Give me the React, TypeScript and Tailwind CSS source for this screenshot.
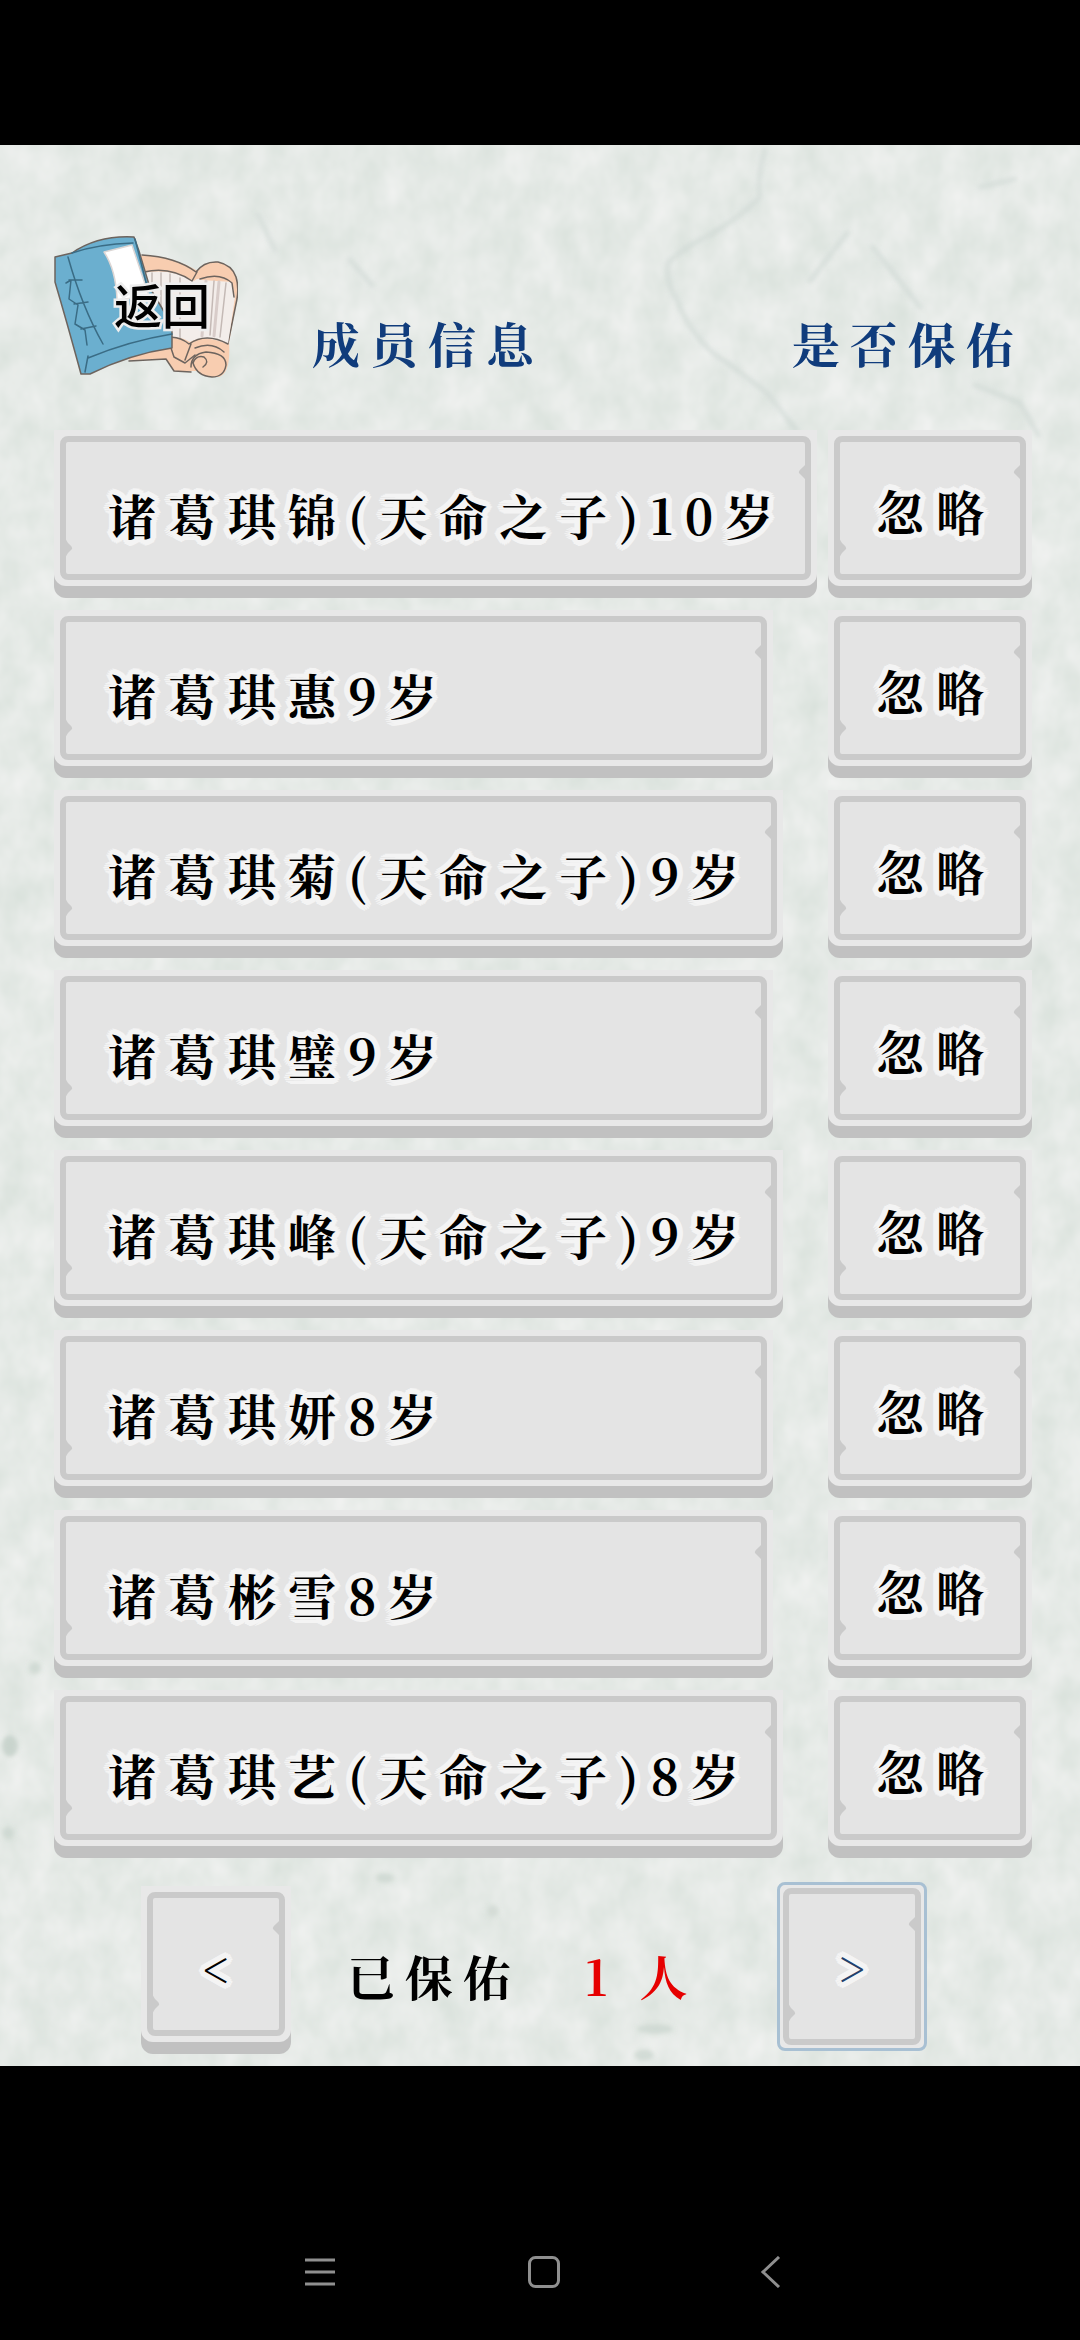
import type { ReactNode } from 'react'

const members = [
  { name: '诸葛琪锦', chosen: true, age: 10 },
  { name: '诸葛琪惠', chosen: false, age: 9 },
  { name: '诸葛琪菊', chosen: true, age: 9 },
  { name: '诸葛琪璧', chosen: false, age: 9 },
  { name: '诸葛琪峰', chosen: true, age: 9 },
  { name: '诸葛琪妍', chosen: false, age: 8 },
  { name: '诸葛彬雪', chosen: false, age: 8 },
  { name: '诸葛琪艺', chosen: true, age: 8 },
]

const halo =
  '[text-shadow:6px_0_#f4f4f4,-6px_0_#f4f4f4,0_6px_#f4f4f4,0_-6px_#f4f4f4,4px_4px_#f4f4f4,-4px_4px_#f4f4f4,4px_-4px_#f4f4f4,-4px_-4px_#f4f4f4,5px_2px_#f4f4f4,5px_-2px_#f4f4f4,-5px_2px_#f4f4f4,-5px_-2px_#f4f4f4,2px_5px_#f4f4f4,-2px_5px_#f4f4f4,2px_-5px_#f4f4f4,-2px_-5px_#f4f4f4,2px_0_#f4f4f4,-2px_0_#f4f4f4,0_2px_#f4f4f4,0_-2px_#f4f4f4]'

// Inner panel of a stone key, with the two chipped edges
function Face({ children, className = '' }: { children: ReactNode; className?: string }) {
  return (
    <span className={`relative flex flex-1 items-center rounded-lg border-6 border-[#cacaca] bg-[#e4e4e4] ${className}`}>
      <svg className="absolute -right-px top-5 h-5 w-2" viewBox="0 0 8 20" fill="#cacaca" aria-hidden="true">
        <path d="M8 2 5 5Q0 9 1 11L5 15 8 18Z" />
      </svg>
      <svg className="absolute -left-px bottom-4 h-5 w-2" viewBox="0 0 8 20" fill="#cacaca" aria-hidden="true">
        <path d="M0 0 3 5Q8 9 7 11L3 15 0 20Z" />
      </svg>
      {children}
    </span>
  )
}

function StoneButton({ children, className = '', face = '', label }: {
  children: ReactNode
  className?: string
  face?: string
  label?: string
}) {
  return (
    <button type="button" aria-label={label} className={`flex h-[168px] rounded-b-xl bg-[#c1c1c1] pb-3 ${className}`}>
      <span className="flex h-full flex-1 rounded-b-xl bg-[#e8e8e8] p-1.5">
        <Face className={face}>{children}</Face>
      </span>
    </button>
  )
}

function Paper() {
  return (
    <svg className="absolute inset-0 -z-10 h-full w-full" aria-hidden="true">
      <filter id="grain" x="0" y="0" width="100%" height="100%" colorInterpolationFilters="sRGB">
        <feTurbulence type="fractalNoise" baseFrequency="0.034 0.026" numOctaves="3" seed="8" />
        <feColorMatrix values="0.1 0 0 0 0.849  0.07 0 0 0 0.882  0.09 0 0 0 0.858  0 0 0 0 1" />
      </filter>
      <filter id="soft" x="-20%" y="-20%" width="140%" height="140%">
        <feGaussianBlur stdDeviation="2" />
      </filter>
      <rect width="100%" height="100%" filter="url(#grain)" />
      <g fill="none" stroke="#cfd8d4" strokeWidth="5" strokeLinecap="round" opacity="0.6" filter="url(#soft)">
        <path d="M765 5Q757 30 760 52Q740 72 713 88Q680 105 668 118Q666 138 677 155Q688 185 713 208Q745 230 767 248L797 286" />
        <path d="M847 88 810 136M873 102 920 162M980 42 1015 34" />
        <path d="M258 70 275 105M350 115 372 140" />
        <path d="M975 240 1020 258 1038 290" />
      </g>
      <g fill="#c9d4cd" filter="url(#soft)">
        <ellipse cx="10" cy="1601" rx="8" ry="11" />
        <ellipse cx="8" cy="1688" rx="6" ry="6" opacity="0.7" />
        <ellipse cx="35" cy="1523" rx="6" ry="6" opacity="0.7" />
        <ellipse cx="385" cy="1733" rx="9" ry="5" opacity="0.7" />
        <ellipse cx="493" cy="1766" rx="6" ry="6" opacity="0.6" />
        <ellipse cx="655" cy="1884" rx="18" ry="5" opacity="0.7" />
        <ellipse cx="644" cy="1910" rx="10" ry="6" opacity="0.7" />
      </g>
    </svg>
  )
}

function Books() {
  return (
    <svg className="h-36 w-[184px]" viewBox="0 0 184 144" aria-hidden="true">
      <g stroke="#6d645e" strokeWidth="1.5" strokeLinejoin="round" strokeLinecap="round">
        <path d="M62 28 90 20Q120 22 144 36Q150 26 164 27Q178 30 182 42Q185 52 183 64L175 108Q177 138 165 142Q152 142 143 136L120 136 112 124 75 125Z" fill="#f8cdb0" stroke="none" />
        <path d="M88 20Q122 22 142 37Q150 26 164 27Q178 30 182 42Q185 52 183 64L174 108M75 126 112 124 120 136 137 137" fill="none" />
        <path d="M90 38Q116 33 140 46 144 42 148 45L178 47 181 62 174 109Q150 99 136 107Q124 100 112 104Z" fill="#f3edea" stroke="none" />
        <path d="M90 37Q116 31 138 46L143 37M146 44Q166 37 178 48L180 62" fill="none" />
        <path d="M98 38V104M107 38V102M116 39V103M126 43V103M160 46 156 100M172 48 166 102" fill="none" stroke="#c4b9b5" />
        <path d="M165 47 160 101M152 46 148 101" fill="none" stroke="#d8ccc9" strokeWidth="3" />
        <path d="M112 103Q124 100 135 109Q152 97 174 109M137 109 131 125M116 110 120 122 131 128 141 120M141 113Q158 106 170 117" fill="none" />
        <path d="M137 132Q137 119 152 117Q172 118 172 130Q170 142 158 142Q143 141 139 128Q142 120 150 122Q156 127 149 132" fill="#f8cdb0" />
        <path d="M1 22 18 18Q44 0 80 2L85 16 96 53 118 90V113Q76 119 36 139L27 139Q12 84 1 47Z" fill="#6bafcf" />
        <path d="M18 18Q44 9 79 8M14 22Q28 72 49 109M34 123Q75 106 118 99M31 137 34 121M15 45 28 45M20 69 34 67M27 94 42 91M12 48 17 45 15 64 24 70 21 89 31 95 33 110" fill="none" stroke="#3a6c85" />
        <path d="M50 17 78 10 95 61 63 65Q62 35 50 17Z" fill="#fff" stroke="#dcd6d4" />
        <path d="M81 4 94 55" fill="none" stroke="#3a6c85" />
      </g>
    </svg>
  )
}

export default function App() {
  return (
    <div className="flex min-h-screen flex-col bg-black font-['Noto_Serif_CJK_SC','Noto_Serif_SC','Liberation_Serif','Noto_Sans_CJK_SC',serif] text-5xl font-bold text-black [font-kerning:none]">
      <main className="relative isolate mt-[145px] bg-[#e3e8e5] px-12 pb-3 pl-[54px]">
        <Paper />

        {/* Header */}
        <header className="flex pt-[90px] pr-2 tracking-[10px] text-[#103c7c]">
          <button type="button" className="relative mr-[74px] mb-[51px] shrink-0">
            <Books />
            <span className="absolute top-10 left-[60px] font-['Noto_Sans_CJK_SC',sans-serif] text-5xl leading-[56px] font-medium tracking-normal text-black [-webkit-text-stroke:5px_#eeeeee] [paint-order:stroke_fill]">
              返回
            </span>
          </button>
          <div className="flex flex-1 justify-between pt-[84px]">
            <h1>成员信息</h1>
            <h2>是否保佑</h2>
          </div>
        </header>

        {/* Members */}
        <ul className="flex flex-col gap-3 tracking-[12px]">
          {members.map((m) => (
            <li key={m.name} className="flex justify-between">
              <StoneButton className="min-w-[719px]" face="pt-3.5 pr-5 pl-[42px]">
                <span className={halo}>
                  {m.name}
                  {m.chosen && '(天命之子)'}
                  {m.age}岁
                </span>
              </StoneButton>
              <StoneButton className="w-[204px]" face="justify-center pt-1.5 pl-3">
                <span className={halo}>忽略</span>
              </StoneButton>
            </li>
          ))}
        </ul>

        {/* Pager */}
        <footer className="flex items-start pt-6 pl-[87px] tracking-[10px]">
          <StoneButton className="mt-1 w-[150px]" face="justify-center pt-2" label="上一页">
            <span className={`font-normal tracking-normal ${halo}`}>&lt;</span>
          </StoneButton>
          <p className="flex flex-1 gap-16 pt-[70px] pl-14">
            <span>已保佑</span>
            <span className="text-[#e60000]">1 人</span>
          </p>
          <button
            type="button"
            aria-label="下一页"
            className="mr-[105px] flex h-[169px] w-[150px] rounded-lg border-3 border-[#a8c0d3] bg-[#e8e8e8] p-[3px] text-[#22406b]"
          >
            <Face className="h-full justify-center">
              <span className={`font-normal tracking-normal ${halo}`}>&gt;</span>
            </Face>
          </button>
        </footer>
      </main>

      {/* System navigation */}
      <nav className="mt-auto flex justify-center gap-48 pb-[52px] pl-2 text-[#8f8f8f]">
        <button type="button" aria-label="菜单">
          <svg className="size-8" viewBox="0 0 32 32" stroke="currentColor" strokeWidth="3">
            <path d="M1 4H31M1 16H31M1 28H31" />
          </svg>
        </button>
        <button type="button" aria-label="主屏幕">
          <svg className="size-8" viewBox="0 0 32 32" fill="none" stroke="currentColor" strokeWidth="3">
            <rect x="1.5" y="1.5" width="29" height="29" rx="6" />
          </svg>
        </button>
        <button type="button" aria-label="返回上一级">
          <svg className="size-8" viewBox="0 0 32 32" fill="none" stroke="currentColor" strokeWidth="3">
            <path d="M27 1 11 16 27 31" />
          </svg>
        </button>
      </nav>
    </div>
  )
}
